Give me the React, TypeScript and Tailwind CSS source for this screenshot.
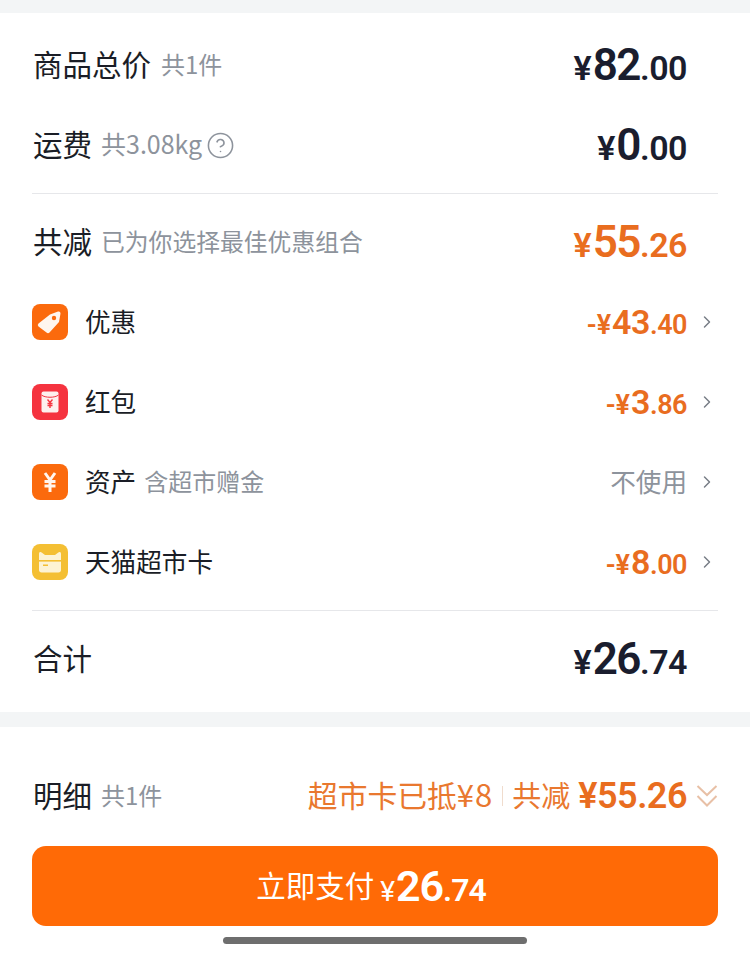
import { ChevronRight, CircleHelp } from 'lucide-react';

const cjk = "font-['Noto_Sans_CJK_SC','Noto_Sans',sans-serif]";
const num = "font-['Roboto',sans-serif] font-semibold";
const label = 'ml-px pb-[5px] text-[29.500px] leading-[40px] text-[#1a1d26]';

function Price({ whole, cents, color }: { whole: string; cents: string; color: string }) {
    return (
        <span className={`${num} ${color} flex items-baseline`}>
            <span className="mr-px text-[34px]">¥</span>
            <span className="text-[44px] tracking-[-1.5px]">{whole}</span>
            <span className="text-[34px] tracking-[-0.5px]">.{cents}</span>
        </span>
    );
}

function TagIcon() {
    return (
        <div className="h-9 w-9 rounded-lg bg-[#fb6a0d]">
            <svg width="36" height="36" viewBox="0 0 36 36">
                <path d="M18 10.500 26 7.500Q28.500 7 28.500 9.500L27 18 17.500 28.500Q16 30 14.500 28.500L6.500 22.500Q5 21 6.500 19.500Z" fill="#fff6ee" />
                <circle cx="22" cy="14" r="2.200" fill="#fb6a0d" />
            </svg>
        </div>
    );
}

function RedPacketIcon() {
    return (
        <div className="h-9 w-9 rounded-lg bg-[#f5333f]">
            <svg width="36" height="36" viewBox="0 0 36 36">
                <rect x="9.500" y="7.500" width="17" height="21" rx="2" fill="#fdf0ee" />
                <path d="M9.500 11C13 14 23 14 26.500 11" fill="none" stroke="#f5333f" strokeWidth="1" />
                <path d="M15.500 15.500 18 18.500 20.500 15.500M18 18.500V24M15.500 19.500H20.500M15.500 21.500H20.500" fill="none" stroke="#f5333f" strokeWidth="1.400" />
            </svg>
        </div>
    );
}

function YenIcon() {
    return (
        <div className="h-9 w-9 rounded-lg bg-[#fb6a0d]">
            <svg width="36" height="36" viewBox="0 0 36 36">
                <path d="M13 9 18 16 23 9M18 16V28M12.500 17.500H23.500M12.500 22H23.500" fill="none" stroke="#fff6ee" strokeWidth="3" />
            </svg>
        </div>
    );
}

function CardIcon() {
    return (
        <div className="h-9 w-9 rounded-lg bg-[#f4bf33]">
            <svg width="36" height="36" viewBox="0 0 36 36">
                <path d="M7 10C7 8 8.500 7.500 10 8.700L13 11H23L26 8.700C27.500 7.500 29 8 29 10V26C29 27.500 28 28.500 26.500 28.500H9.500C8 28.500 7 27.500 7 26Z" fill="#fdf3d3" />
                <rect x="7" y="16" width="22" height="1.600" fill="#f4bf33" />
                <rect x="11" y="20.500" width="5" height="1.500" fill="#f4bf33" />
            </svg>
        </div>
    );
}

function DiscountRow({ icon, name, sub, children }: { icon: React.ReactNode; name: string; sub?: string; children: React.ReactNode }) {
    return (
        <div className="flex h-20 items-center">
            {icon}
            <span className="ml-[17px] pb-[2px] text-[25.600px] text-[#1a1d26]">{name}</span>
            {sub && <span className="ml-[8px] pb-[2px] text-[24px] text-[#8d939c]">{sub}</span>}
            <div className="ml-auto flex items-center">
                {children}
                <ChevronRight className="mr-px ml-[10px] text-[#777d86]" size={20} strokeWidth={1.75} />
            </div>
        </div>
    );
}

function Discount({ whole, cents }: { whole: string; cents: string }) {
    return (
        <span className={`${num} flex items-baseline text-[#e96d1f]`}>
            <span className="mr-px text-[27px]">-¥</span>
            <span className="text-[34px] tracking-[-0.5px]">{whole}</span>
            <span className="text-[27px] tracking-[-0.5px]">.{cents}</span>
        </span>
    );
}

export default function App() {
    return (
        <div className={`${cjk} h-[956px] w-[750px] overflow-hidden bg-[#f3f5f6]`}>
            <div className="h-[13px]" />

            <div className="bg-white px-8 pt-3 pb-[13px]">
                <div className="flex h-20 items-center justify-between pr-[31px]">
                    <div className="flex items-center">
                        <span className={label}>商品总价</span>
                        <span className="ml-[10px] pb-[3px] text-[24px] text-[#8d939c]">共1件</span>
                    </div>
                    <Price whole="82" cents="00" color="text-[#1a1d2e]" />
                </div>
                <div className="flex h-20 items-center justify-between pr-[31px]">
                    <div className="flex items-center">
                        <span className={label}>运费</span>
                        <span className="ml-[9px] pb-[2px] text-[25px] text-[#8d939c]">共3.08kg</span>
                        <CircleHelp className="ml-[4px] text-[#8d939c]" size={29} strokeWidth={1.3} />
                    </div>
                    <Price whole="0" cents="00" color="text-[#1a1d2e]" />
                </div>
                <div className="mt-2 h-px bg-[#e6e7ea]" />

                <div className="mt-2 flex h-20 items-center justify-between pr-[31px]">
                    <div className="flex items-center">
                        <span className={label}>共减</span>
                        <span className="ml-[9px] pb-[3px] text-[23.800px] text-[#8d939c]">已为你选择最佳优惠组合</span>
                    </div>
                    <Price whole="55" cents="26" color="text-[#e96d1f]" />
                </div>

                <DiscountRow icon={<TagIcon />} name="优惠">
                    <Discount whole="43" cents="40" />
                </DiscountRow>
                <DiscountRow icon={<RedPacketIcon />} name="红包">
                    <Discount whole="3" cents="86" />
                </DiscountRow>
                <DiscountRow icon={<YenIcon />} name="资产" sub="含超市赠金">
                    <span className="pb-[2px] text-[25.600px] text-[#8d939c]">不使用</span>
                </DiscountRow>
                <DiscountRow icon={<CardIcon />} name="天猫超市卡">
                    <Discount whole="8" cents="00" />
                </DiscountRow>

                <div className="mt-2 h-px bg-[#e6e7ea]" />

                <div className="mt-2 flex h-20 items-center justify-between pr-[31px]">
                    <span className={label}>合计</span>
                    <Price whole="26" cents="74" color="text-[#1a1d2e]" />
                </div>
            </div>

            <div className="h-[15px]" />

            <div className="flex h-[229px] flex-col bg-white px-8">
                <div className="mt-[44px] flex h-[50px] items-center justify-between">
                    <div className="flex items-center">
                        <span className={label}>明细</span>
                        <span className="ml-[9px] pb-[3px] text-[24px] text-[#8d939c]">共1件</span>
                    </div>
                    <div className="flex items-center text-[#e9782f]">
                        <span className="pb-[3px] text-[29.800px]">超市卡已抵<span className="text-[31px] tracking-[1px]">¥8</span></span>
                        <span className="mx-[9px] h-5 w-px bg-[#f0dccd]" />
                        <span className="pb-[3px] text-[29px]">共减</span>
                        <span className={`${num} ml-2 text-[36px] tracking-[-0.5px] text-[#e96d1f]`}>¥55.26</span>
                        <svg className="ml-[9px]" width="22" height="24" viewBox="0 0 22 24" fill="none" stroke="#e8c0a6" strokeWidth="2">
                            <path d="M1.500 2 11 11 20.500 2M1.500 12 11 21.500 20.500 12" />
                        </svg>
                    </div>
                </div>
                <div className="mt-[25px] flex h-20 items-center justify-center rounded-[14px] bg-[#ff6a06] pr-2 text-white">
                    <span className="pb-[3px] text-[29.500px]">立即支付</span>
                    <span className={`${num} ml-[6px] flex items-baseline`}>
                        <span className="mr-px text-[28px] font-normal">¥</span>
                        <span className="text-[43px] tracking-[-1px]">26</span>
                        <span className="text-[32px] tracking-[-1px]">.74</span>
                    </span>
                </div>
                <div className="mx-auto mt-[11px] h-[7px] w-[304px] rounded-full bg-[#6e6e6e]" />
            </div>
        </div>
    );
}
